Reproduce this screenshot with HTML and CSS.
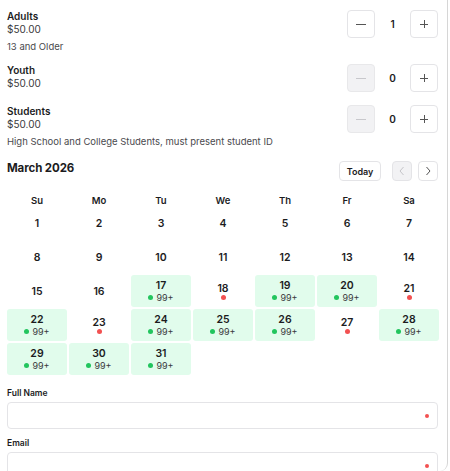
FILE: index.html
```html
<!DOCTYPE html>
<html>
<head>
<meta charset="utf-8">
<link rel="stylesheet" href="styles.css">
</head>
<body>
<div class="card">
  <div class="ticket">
    <div class="ticket-head">
      <div class="info">
        <div class="t-name">Adults</div>
        <div class="t-price">$50.00</div>
      </div>
      <div class="stepper">
        <button class="step"><span class="minus"></span></button>
        <span class="qty">1</span>
        <button class="step"><span class="plus"></span></button>
      </div>
    </div>
    <div class="t-desc">13 and Older</div>
  </div>
  <div class="ticket">
    <div class="ticket-head">
      <div class="info">
        <div class="t-name">Youth</div>
        <div class="t-price">$50.00</div>
      </div>
      <div class="stepper">
        <button class="step disabled"><span class="minus"></span></button>
        <span class="qty">0</span>
        <button class="step"><span class="plus"></span></button>
      </div>
    </div>
  </div>
  <div class="ticket">
    <div class="ticket-head">
      <div class="info">
        <div class="t-name">Students</div>
        <div class="t-price">$50.00</div>
      </div>
      <div class="stepper">
        <button class="step disabled"><span class="minus"></span></button>
        <span class="qty">0</span>
        <button class="step"><span class="plus"></span></button>
      </div>
    </div>
    <div class="t-desc">High School and College Students, must present student ID</div>
  </div>

  <div class="cal-nav">
    <div class="month">March 2026</div>
    <div class="nav-btns">
      <button class="today">Today</button>
      <button class="arrow disabled"><svg width="8" height="10" viewBox="0 0 8 10"><path d="M5.5 1 L2 5 L5.5 9" fill="none" stroke="#c4c4c8" stroke-width="1"/></svg></button>
      <button class="arrow"><svg width="8" height="10" viewBox="0 0 8 10"><path d="M2.5 1 L6 5 L2.5 9" fill="none" stroke="#555" stroke-width="1"/></svg></button>
    </div>
  </div>

  <div class="weekdays">
    <span>Su</span><span>Mo</span><span>Tu</span><span>We</span><span>Th</span><span>Fr</span><span>Sa</span>
  </div>
  <div class="days">
    <div class="day"><span class="num">1</span></div>
    <div class="day"><span class="num">2</span></div>
    <div class="day"><span class="num">3</span></div>
    <div class="day"><span class="num">4</span></div>
    <div class="day"><span class="num">5</span></div>
    <div class="day"><span class="num">6</span></div>
    <div class="day"><span class="num">7</span></div>

    <div class="day"><span class="num">8</span></div>
    <div class="day"><span class="num">9</span></div>
    <div class="day"><span class="num">10</span></div>
    <div class="day"><span class="num">11</span></div>
    <div class="day"><span class="num">12</span></div>
    <div class="day"><span class="num">13</span></div>
    <div class="day"><span class="num">14</span></div>

    <div class="day"><span class="num">15</span></div>
    <div class="day"><span class="num">16</span></div>
    <div class="day avail"><span class="num">17</span><span class="stat"><i class="dot green"></i>99+</span></div>
    <div class="day"><span class="num">18</span><span class="stat"><i class="dot red"></i></span></div>
    <div class="day avail"><span class="num">19</span><span class="stat"><i class="dot green"></i>99+</span></div>
    <div class="day avail"><span class="num">20</span><span class="stat"><i class="dot green"></i>99+</span></div>
    <div class="day"><span class="num">21</span><span class="stat"><i class="dot red"></i></span></div>

    <div class="day avail"><span class="num">22</span><span class="stat"><i class="dot green"></i>99+</span></div>
    <div class="day"><span class="num">23</span><span class="stat"><i class="dot red"></i></span></div>
    <div class="day avail"><span class="num">24</span><span class="stat"><i class="dot green"></i>99+</span></div>
    <div class="day avail"><span class="num">25</span><span class="stat"><i class="dot green"></i>99+</span></div>
    <div class="day avail"><span class="num">26</span><span class="stat"><i class="dot green"></i>99+</span></div>
    <div class="day"><span class="num">27</span><span class="stat"><i class="dot red"></i></span></div>
    <div class="day avail"><span class="num">28</span><span class="stat"><i class="dot green"></i>99+</span></div>

    <div class="day avail"><span class="num">29</span><span class="stat"><i class="dot green"></i>99+</span></div>
    <div class="day avail"><span class="num">30</span><span class="stat"><i class="dot green"></i>99+</span></div>
    <div class="day avail"><span class="num">31</span><span class="stat"><i class="dot green"></i>99+</span></div>
  </div>

  <div class="field">
    <label class="f-label">Full Name</label>
    <div class="input"><i class="req"></i></div>
  </div>
  <div class="field">
    <label class="f-label">Email</label>
    <div class="input"><i class="req"></i></div>
  </div>
</div>
</body>
</html>
```

FILE: styles.css
```css
* { box-sizing: border-box; }
html, body { margin: 0; padding: 0; background: #fff; }
body {
  font-family: Inter, "Noto Sans", sans-serif;
  color: #1c1c1e;
  overflow: hidden;
}
.card {
  width: 448px;
  height: 471px;
  padding: 10px 9px 0 7px;
  border-right: 1px solid #d6d6d6;
  border-bottom-right-radius: 8px;
  overflow: hidden;
}
button { font-family: inherit; padding: 0; margin: 0; cursor: pointer; }

.ticket { margin-bottom: 13px; }
.ticket:nth-child(1) { margin-bottom: 11px; }
.ticket-head {
  display: flex;
  justify-content: space-between;
  align-items: flex-start;
}
.t-name { font-size: 10px; font-weight: 600; line-height: 13px; }
.t-price { font-size: 10px; line-height: 13px; color: #3a3a3c; }
.t-desc { font-size: 9.5px; line-height: 13px; color: #4a4a4e; margin-top: 2px; }

.stepper { display: flex; align-items: center; }
.step {
  width: 28px; height: 28px;
  background: #fff;
  border: 1px solid #e4e4e7;
  border-radius: 4px;
  display: flex; align-items: center; justify-content: center;
}
.step.disabled { background: #f2f2f4; border-color: #e8e8ea; }
.qty {
  width: 35px; text-align: center;
  font-size: 10px; font-weight: 600;
}
.minus { display: block; width: 10px; height: 1px; background: #555; }
.step.disabled .minus { background: #c8c8cc; }
.plus { display: block; width: 8px; height: 8px; position: relative; }
.plus::before, .plus::after {
  content: ""; position: absolute; background: #555;
}
.plus::before { left: 0; top: 3.5px; width: 8px; height: 1px; }
.plus::after { left: 3.5px; top: 0; width: 1px; height: 8px; }

.cal-nav {
  display: flex; justify-content: space-between; align-items: center;
  margin-top: 9px;
  height: 20px;
}
.month { font-size: 11.5px; font-weight: 700; line-height: 14px; margin-top: -6px; letter-spacing: -0.1px; }
.nav-btns { display: flex; align-items: center; gap: 6px; }
.today {
  height: 20px; width: 42px;
  background: #fff; border: 1px solid #e4e4e7; border-radius: 4px;
  font-size: 9px; font-weight: 600; color: #1c1c1e;
  margin-right: 5px;
}
.arrow {
  width: 20px; height: 20px;
  background: #fff; border: 1px solid #e4e4e7; border-radius: 4px;
  display: flex; align-items: center; justify-content: center;
}
.arrow.disabled { background: #f2f2f4; }

.weekdays {
  display: grid; grid-template-columns: repeat(7, 60px); column-gap: 2px;
  margin-top: 11px; height: 17px;
  align-items: center;
}
.weekdays span { text-align: center; font-size: 9.5px; font-weight: 600; }
.days {
  display: grid; grid-template-columns: repeat(7, 60px); grid-auto-rows: 32px;
  gap: 2px; margin-top: -2px;
}
.day {
  display: flex; flex-direction: column; align-items: center; justify-content: center;
  border-radius: 3px;
}
.day.avail { background: #e1fcec; }
.num { font-size: 10.5px; font-weight: 600; line-height: 13px; }
.stat {
  display: flex; align-items: center; gap: 3px;
  font-size: 9px; line-height: 11px; color: #3a3a3c;
}
.dot { display: block; width: 5px; height: 5px; border-radius: 50%; }
.dot.green { background: #22c55e; }
.dot.red { background: #f25151; }

.field { margin-top: 12px; }
.field + .field { margin-top: 8px; }
.f-label { display: block; font-size: 8.5px; font-weight: 600; line-height: 13px; margin-bottom: 2px; }
.input {
  height: 27px;
  border: 1px solid #e4e4e7; border-radius: 4px;
  display: flex; align-items: center; justify-content: flex-end;
  padding-right: 8px;
}
.req { display: block; width: 4px; height: 4px; border-radius: 50%; background: #f25151; }
```
